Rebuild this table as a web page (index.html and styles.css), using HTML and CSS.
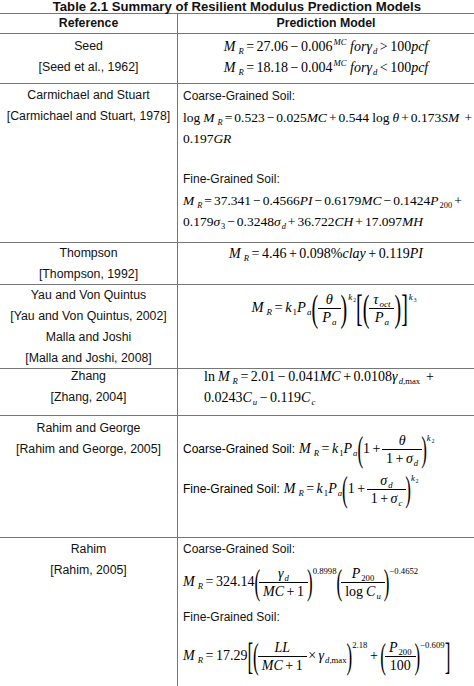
FILE: index.html
```html
<!DOCTYPE html>
<html>
<head>
<meta charset="utf-8">
<title>Table 2.1</title>
<link rel="stylesheet" href="styles.css">
</head>
<body>
<div class="title"><span class="title-text">Table 2.1 Summary of Resilient Modulus Prediction Models</span></div>
<div class="table">
  <div class="row head">
    <div class="ref">Reference</div>
    <div class="model">Prediction Model</div>
  </div>

  <div class="row r-seed">
    <div class="ref"><div>Seed</div><div>[Seed et al., 1962]</div></div>
    <div class="model eqs center">
      <div class="eq"><i>M</i><sub class="r"><i>R</i></sub><span class="o">=</span>27.06<span class="o">−</span>0.006<sup><i>MC</i></sup> <i>for</i><i>γ</i><sub><i>d</i></sub><span class="o">&gt;</span>100<i>pcf</i></div>
      <div class="eq"><i>M</i><sub class="r"><i>R</i></sub><span class="o">=</span>18.18<span class="o">−</span>0.004<sup><i>MC</i></sup> <i>for</i><i>γ</i><sub><i>d</i></sub><span class="o">&lt;</span>100<i>pcf</i></div>
    </div>
  </div>

  <div class="row r-carm">
    <div class="ref"><div>Carmichael and Stuart</div><div>[Carmichael and Stuart, 1978]</div></div>
    <div class="model eqs">
      <div class="lbl">Coarse-Grained Soil:</div>
      <div class="eq">log<i class="sp">M</i><sub class="r"><i>R</i></sub><span class="o">=</span>0.523<span class="o">−</span>0.025<i>MC</i><span class="o">+</span>0.544 log<i class="sp">θ</i><span class="o">+</span>0.173<i>SM</i> <span class="o">+</span></div>
      <div class="eq">0.197<i>GR</i></div>
      <div class="gap"></div>
      <div class="lbl">Fine-Grained Soil:</div>
      <div class="eq"><i>M</i><sub class="r"><i>R</i></sub><span class="o">=</span>37.341<span class="o">−</span>0.4566<i>PI</i><span class="o">−</span>0.6179<i>MC</i><span class="o">−</span>0.1424<i>P</i><sub>200</sub><span class="o">+</span></div>
      <div class="eq">0.179<i>σ</i><sub>3</sub><span class="o">−</span>0.3248<i>σ</i><sub><i>d</i></sub><span class="o">+</span>36.722<i>CH</i><span class="o">+</span>17.097<i>MH</i></div>
    </div>
  </div>

  <div class="row r-thom">
    <div class="ref"><div>Thompson</div><div>[Thompson, 1992]</div></div>
    <div class="model eqs center">
      <div class="eq"><i>M</i><sub class="r"><i>R</i></sub><span class="o">=</span>4.46<span class="o">+</span>0.098%<i>clay</i><span class="o">+</span>0.119<i>PI</i></div>
    </div>
  </div>

  <div class="row r-yau">
    <div class="ref"><div>Yau and Von Quintus</div><div>[Yau and Von Quintus, 2002]</div><div>Malla and Joshi</div><div>[Malla and Joshi, 2008]</div></div>
    <div class="model eqs center">
      <div class="eq tall"><i>M</i><sub class="r"><i>R</i></sub><span class="o">=</span><i>k</i><sub>1</sub><i>P</i><sub><i>a</i></sub><span class="bp">(</span><span class="frac"><span class="num"><i>θ</i></span><span class="den"><i>P</i><sub><i>a</i></sub></span></span><span class="bp">)</span><sup class="hi"><i>k</i><sub>2</sub></sup><span class="bb">[</span><span class="bp">(</span><span class="frac"><span class="num"><i>τ</i><sub><i>oct</i></sub></span><span class="den"><i>P</i><sub><i>a</i></sub></span></span><span class="bp">)</span><span class="bb">]</span><sup class="hi"><i>k</i><sub>3</sub></sup></div>
    </div>
  </div>

  <div class="row r-zhang">
    <div class="ref"><div>Zhang</div><div>[Zhang, 2004]</div></div>
    <div class="model eqs indent">
      <div class="eq">ln<i class="sp">M</i><sub class="r"><i>R</i></sub><span class="o">=</span>2.01<span class="o">−</span>0.041<i>MC</i><span class="o">+</span>0.0108<i>γ</i><sub><i>d</i>,max</sub> <span class="o">+</span></div>
      <div class="eq">0.0243<i>C</i><sub><i>u</i></sub><span class="o">−</span>0.119<i>C</i><sub><i>c</i></sub></div>
    </div>
  </div>

  <div class="row r-rg">
    <div class="ref"><div>Rahim and George</div><div>[Rahim and George, 2005]</div></div>
    <div class="model eqs">
      <div class="eq tall mixed"><span class="lbl-in">Coarse-Grained Soil:</span><i>M</i><sub class="r"><i>R</i></sub><span class="o">=</span><i>k</i><sub>1</sub><i>P</i><sub><i>a</i></sub><span class="bp">(</span>1<span class="o">+</span><span class="frac"><span class="num"><i>θ</i></span><span class="den">1<span class="o">+</span><i>σ</i><sub><i>d</i></sub></span></span><span class="bp">)</span><sup class="hi"><i>k</i><sub>2</sub></sup></div>
      <div class="eq tall mixed"><span class="lbl-in">Fine-Grained Soil:</span><i>M</i><sub class="r"><i>R</i></sub><span class="o">=</span><i>k</i><sub>1</sub><i>P</i><sub><i>a</i></sub><span class="bp">(</span>1<span class="o">+</span><span class="frac"><span class="num"><i>σ</i><sub><i>d</i></sub></span><span class="den">1<span class="o">+</span><i>σ</i><sub><i>c</i></sub></span></span><span class="bp">)</span><sup class="hi"><i>k</i><sub>2</sub></sup></div>
    </div>
  </div>

  <div class="row r-rahim">
    <div class="ref"><div>Rahim</div><div>[Rahim, 2005]</div></div>
    <div class="model eqs">
      <div class="lbl">Coarse-Grained Soil:</div>
      <div class="eq tall"><i>M</i><sub class="r"><i>R</i></sub><span class="o">=</span>324.14<span class="bp">(</span><span class="frac"><span class="num"><i>γ</i><sub><i>d</i></sub></span><span class="den"><i>MC</i><span class="o">+</span>1</span></span><span class="bp">)</span><sup class="hi">0.8998</sup><span class="bp">(</span><span class="frac"><span class="num"><i>P</i><sub>200</sub></span><span class="den">log<i class="sp">C</i><sub><i>u</i></sub></span></span><span class="bp">)</span><sup class="hi">−0.4652</sup></div>
      <div class="lbl lbl2">Fine-Grained Soil:</div>
      <div class="eq tall eq-last"><i>M</i><sub class="r"><i>R</i></sub><span class="o">=</span>17.29<span class="bb">[</span><span class="bp">(</span><span class="frac"><span class="num"><i>LL</i></span><span class="den"><i>MC</i><span class="o">+</span>1</span></span><span class="o">×</span><i>γ</i><sub><i>d</i>,max</sub><span class="bp">)</span><sup class="hi">2.18</sup><span class="o">+</span><span class="bp">(</span><span class="frac"><span class="num"><i>P</i><sub>200</sub></span><span class="den">100</span></span><span class="bp">)</span><sup class="hi">−0.609</sup><span class="bb">]</span></div>
    </div>
  </div>
</div>
</body>
</html>
```
FILE: styles.css
```css
html, body {
  margin: 0;
  padding: 0;
  background: #fff;
  color: #111;
}
body {
  width: 474px;
  height: 686px;
  overflow: hidden;
  font-family: "Liberation Sans", Arial, sans-serif;
  font-size: 12.3px;
}
.title {
  height: 13px;
  line-height: 13px;
  font-size: 13.5px;
  font-weight: bold;
  text-align: center;
  border-bottom: 1px solid #777;
  white-space: nowrap;
}
.title-text {
  display: inline-block;
  transform: scaleX(0.975);
}
.table {
  display: flex;
  flex-direction: column;
}
.row {
  display: grid;
  grid-template-columns: 178px minmax(0, 1fr);
  border-bottom: 1px solid #777;
}
.ref {
  border-right: 1px solid #777;
  text-align: center;
  line-height: 21px;
  white-space: nowrap;
}
.model {
  padding-left: 5px;
  line-height: 21px;
  white-space: nowrap;
}
.head {
  height: 19px;
  font-weight: bold;
}
.head .ref, .head .model {
  line-height: 19px;
}
.head .model {
  text-align: center;
  padding-left: 0;
}
.center {
  text-align: center;
  padding-left: 0;
}
.indent {
  padding-left: 26px;
}
.lbl { font-size: 12px; }

/* row heights */
.r-seed { height: 49px; }
.r-seed .ref { padding-top: 2px; }
.r-seed .model { padding-top: 2px; }
.r-carm { height: 158px; }
.r-carm .ref { padding-top: 1px; }
.r-carm .model { padding-top: 2px; }
.r-carm .eq { font-size: 13.5px; }
.r-carm .o { padding: 0 2px; }
.r-thom { height: 41px; }
.r-yau { height: 83px; }
.r-yau .model { padding-top: 2px; padding-left: 16px; }
.r-yau .eq { font-size: 14.5px; }
.r-yau .bp, .r-yau .bb { font-size: 20px; transform: scaleY(1.85); }
.r-yau .frac { margin: 0 2px; }
.r-yau .eq sup.hi { margin-left: 1px; }
.r-zhang { height: 46px; }
.r-zhang .ref > div:first-child,
.r-zhang .model > .eq:first-child { margin-top: -3px; }
.r-rg { height: 121px; }
.r-rg .ref { padding-top: 2px; }
.r-rg .model { padding-top: 13px; }
.r-rahim { height: 160px; border-bottom: none; }
.r-rahim .ref, .r-rahim .model { padding-top: 1px; }
.r-rahim .eq.tall { height: 44px; line-height: 44px; }
.lbl2 { margin-top: 3px; }
.r-rahim .eq-last { margin-top: 6px; }

.gap { height: 20px; }

/* math */
.eq {
  font-family: "Liberation Serif", "Times New Roman", serif;
  font-size: 14px;
  color: #000;
}
.eq i { font-style: italic; }
.eq sub, .eq sup {
  font-size: 62%;
  line-height: 0;
  font-style: normal;
}
.eq sub { vertical-align: -0.35em; margin-left: 1px; }
.eq sup { vertical-align: 0.75em; margin-left: 1px; }
.eq sub.r { margin-left: 3px; }
.eq sub sub { font-size: 100%; vertical-align: -0.2em; }
.o { padding: 0 2.5px; }
.sp { margin-left: 3px; }

.tall {
  line-height: 40px;
  height: 40px;
}
.mixed .lbl-in {
  font-family: "Liberation Sans", Arial, sans-serif;
  font-size: 12px;
  margin-right: 4px;
}
.frac {
  display: inline-flex;
  flex-direction: column;
  align-items: center;
  vertical-align: middle;
  line-height: 17px;
  margin: 0 1px;
}
.num {
  border-bottom: 1px solid #000;
  padding: 0 2px;
  width: 100%;
  text-align: center;
}
.den {
  padding: 0 2px;
}
.bp, .bb {
  display: inline-block;
  font-size: 17px;
  line-height: 17px;
  vertical-align: middle;
  transform: scaleY(2.1);
  font-weight: normal;
}
.bb { transform: scaleY(2.2); }
.eq sup.hi {
  vertical-align: 1.35em;
  margin-left: 0;
}
```
